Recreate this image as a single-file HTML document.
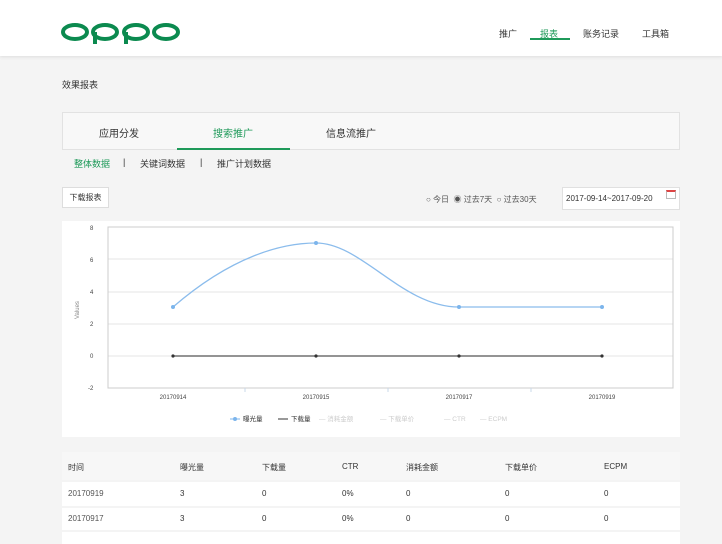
<!DOCTYPE html>
<html><head><meta charset="utf-8"><style>
*{margin:0;padding:0;box-sizing:border-box}
body{width:722px;height:542px;overflow:hidden;background:#f4f4f4;font-family:"Liberation Sans","Noto Sans CJK SC",sans-serif;font-size:9px;color:#333;position:relative}
.a{position:absolute;white-space:nowrap}
.hdr{position:absolute;left:0;top:0;width:722px;height:56px;background:#fff;box-shadow:0 1px 3px #ddd}
.g{color:#1f9a5a}
</style></head><body>
<div class="hdr"></div>
<svg class="a" style="left:60px;top:21px" width="122" height="24" viewBox="0 0 122 24">
<g fill="none" stroke="#0b8a4f" stroke-width="4">
<ellipse cx="15" cy="11" rx="12" ry="7"/>
<ellipse cx="45" cy="11" rx="12" ry="7"/><line x1="35" y1="11" x2="35" y2="23"/>
<ellipse cx="76" cy="11" rx="12" ry="7"/><line x1="66" y1="11" x2="66" y2="23"/>
<ellipse cx="106" cy="11" rx="12" ry="7"/>
</g></svg>
<div class="a" style="left:499px;top:27px">推广</div>
<div class="a g" style="left:540px;top:27px">报表</div>
<div class="a" style="left:530px;top:38px;width:40px;height:2px;background:#1f9a5a"></div>
<div class="a" style="left:583px;top:27px">账务记录</div>
<div class="a" style="left:642px;top:27px">工具箱</div>
<div class="a" style="left:62px;top:78px">效果报表</div>
<div class="a" style="left:62px;top:112px;width:618px;height:38px;background:#f8f8f8;border:1px solid #e2e2e2"></div>
<div class="a" style="left:99px;top:125px;font-size:10px">应用分发</div>
<div class="a g" style="left:213px;top:125px;font-size:10px">搜索推广</div>
<div class="a" style="left:177px;top:148px;width:113px;height:2px;background:#1f9a5a"></div>
<div class="a" style="left:326px;top:125px;font-size:10px">信息流推广</div>
<div class="a g" style="left:74px;top:157px">整体数据</div>
<div class="a" style="left:123px;top:157px">|</div>
<div class="a" style="left:140px;top:157px">关键词数据</div>
<div class="a" style="left:200px;top:157px">|</div>
<div class="a" style="left:217px;top:157px">推广计划数据</div>
<div class="a" style="left:62px;top:187px;width:47px;height:21px;background:#fff;border:1px solid #ddd;font-size:8px;line-height:19px;text-align:center">下载报表</div>
<div class="a" style="left:426px;top:194px;font-size:8px;color:#555">○ 今日 &nbsp;◉ 过去7天 &nbsp;○ 过去30天</div>
<div class="a" style="left:562px;top:187px;width:118px;height:23px;background:#fff;border:1px solid #e0e0e0;font-size:8px;line-height:21px;padding-left:3px">2017-09-14~2017-09-20</div>
<div class="a" style="left:666px;top:190px;width:10px;height:9px;border:1px solid #bbb;border-top:2px solid #d44"></div>
<div class="a" style="left:62px;top:221px;width:618px;height:216px;background:#fff"></div>
<svg class="a" style="left:62px;top:221px" width="618" height="216" font-family="Liberation Sans" font-size="6" fill="#444">
<g stroke="#e6e6e6"><line x1="46" y1="38" x2="611" y2="38"/><line x1="46" y1="71" x2="611" y2="71"/><line x1="46" y1="103" x2="611" y2="103"/><line x1="46" y1="135" x2="611" y2="135"/></g>
<rect x="46" y="6" width="565" height="161" fill="none" stroke="#ccc"/>
<g stroke="#c8d8ea"><line x1="183" y1="167" x2="183" y2="171"/><line x1="326" y1="167" x2="326" y2="171"/><line x1="469" y1="167" x2="469" y2="171"/></g>
<text x="28" y="9">8</text><text x="28" y="41">6</text><text x="28" y="73">4</text><text x="28" y="105">2</text><text x="28" y="137">0</text><text x="26" y="169">-2</text>
<text transform="translate(17,98) rotate(-90)" fill="#888">Values</text>
<g text-anchor="middle"><text x="111" y="178">20170914</text><text x="254" y="178">20170915</text><text x="397" y="178">20170917</text><text x="540" y="178">20170919</text></g>
<path d="M111 86 C170 35 220 22 254 22 C300 22 340 86 397 86 L540 86" fill="none" stroke="#8bbcec" stroke-width="1.3"/>
<g fill="#7cb5ec"><circle cx="111" cy="86" r="2"/><circle cx="254" cy="22" r="2"/><circle cx="397" cy="86" r="2"/><circle cx="540" cy="86" r="2"/></g>
<line x1="111" y1="135" x2="540" y2="135" stroke="#555" stroke-width="1.3"/>
<g fill="#333"><circle cx="111" cy="135" r="1.6"/><circle cx="254" cy="135" r="1.6"/><circle cx="397" cy="135" r="1.6"/><circle cx="540" cy="135" r="1.6"/></g>
<g font-size="6.5"><line x1="168" y1="198" x2="178" y2="198" stroke="#7cb5ec"/><circle cx="173" cy="198" r="2" fill="#7cb5ec"/><text x="181" y="200" fill="#333">曝光量</text>
<line x1="216" y1="198" x2="226" y2="198" stroke="#333"/><text x="229" y="200" fill="#333">下载量</text>
<g fill="#ccc"><text x="257" y="200">— 消耗金额</text><text x="318" y="200">— 下载单价</text><text x="382" y="200">— CTR</text><text x="418" y="200">— ECPM</text></g></g>
</svg>
<div class="a" style="left:62px;top:452px;width:618px;height:28px;background:#f7f7f7"></div>
<div class="a" style="left:62px;top:482px;width:618px;height:24px;background:#fff"></div>
<div class="a" style="left:62px;top:508px;width:618px;height:22px;background:#fff"></div>
<div class="a" style="left:62px;top:532px;width:618px;height:12px;background:#fff"></div>
<div class="a" style="left:68px;top:462px;font-size:8px">时间</div><div class="a" style="left:180px;top:462px;font-size:8px">曝光量</div><div class="a" style="left:262px;top:462px;font-size:8px">下载量</div><div class="a" style="left:342px;top:462px;font-size:8px">CTR</div><div class="a" style="left:406px;top:462px;font-size:8px">消耗金额</div><div class="a" style="left:505px;top:462px;font-size:8px">下载单价</div><div class="a" style="left:604px;top:462px;font-size:8px">ECPM</div>
<div class="a" style="left:68px;top:489px;font-size:8px;color:#555">20170919</div><div class="a" style="left:180px;top:489px;font-size:8px">3</div><div class="a" style="left:262px;top:489px;font-size:8px">0</div><div class="a" style="left:342px;top:489px;font-size:8px">0%</div><div class="a" style="left:406px;top:489px;font-size:8px">0</div><div class="a" style="left:505px;top:489px;font-size:8px">0</div><div class="a" style="left:604px;top:489px;font-size:8px">0</div>
<div class="a" style="left:68px;top:514px;font-size:8px;color:#555">20170917</div><div class="a" style="left:180px;top:514px;font-size:8px">3</div><div class="a" style="left:262px;top:514px;font-size:8px">0</div><div class="a" style="left:342px;top:514px;font-size:8px">0%</div><div class="a" style="left:406px;top:514px;font-size:8px">0</div><div class="a" style="left:505px;top:514px;font-size:8px">0</div><div class="a" style="left:604px;top:514px;font-size:8px">0</div>
</body></html>
